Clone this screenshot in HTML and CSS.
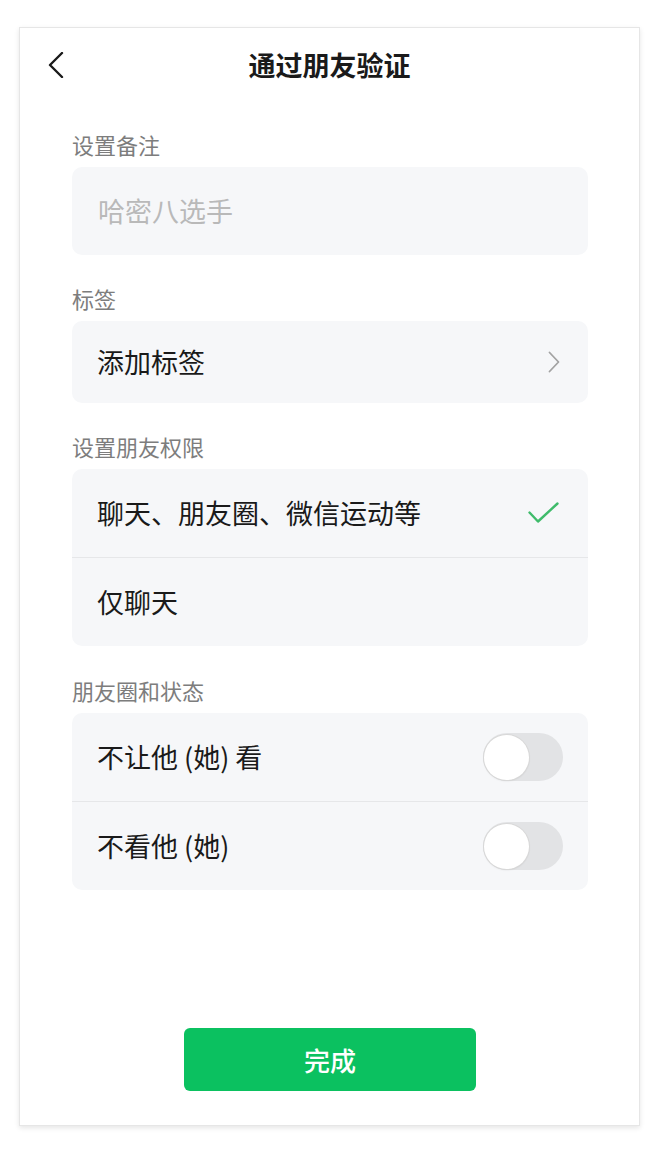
FILE: index.html
```html
<!DOCTYPE html>
<html lang="zh-CN">
<head>
<meta charset="utf-8">
<title>通过朋友验证</title>
<link rel="stylesheet" href="styles.css">
</head>
<body>
<div class="phone">
  <header class="topbar">
    <span class="back">
      <svg width="16" height="26" viewBox="0 0 16 26"><polyline points="14,1 2,13 14,25" fill="none" stroke="#1a1a1a" stroke-width="2.4" stroke-linecap="round" stroke-linejoin="round"/></svg>
    </span>
    <h1 class="title">通过朋友验证</h1>
    <span></span>
  </header>

  <main class="content">
    <section class="section first">
      <div class="label">设置备注</div>
      <div class="card">
        <div class="row input-row"><span class="placeholder">哈密八选手</span></div>
      </div>
    </section>

    <section class="section">
      <div class="label">标签</div>
      <div class="card">
        <div class="row tag-row">
          <span class="text">添加标签</span>
          <svg class="chev" width="12" height="22" viewBox="0 0 12 22"><polyline points="1.5,1.5 10.5,11 1.5,20.5" fill="none" stroke="#a3a3a3" stroke-width="1.8" stroke-linecap="round" stroke-linejoin="round"/></svg>
        </div>
      </div>
    </section>

    <section class="section">
      <div class="label">设置朋友权限</div>
      <div class="card">
        <div class="row">
          <span class="text">聊天、朋友圈、微信运动等</span>
          <svg class="check" width="31" height="22" viewBox="0 0 31 22"><polyline points="1.5,10.5 10,19.5 29.5,1.5" fill="none" stroke="#3fbb6b" stroke-width="2.4" stroke-linecap="round" stroke-linejoin="round"/></svg>
        </div>
        <div class="divider"></div>
        <div class="row">
          <span class="text">仅聊天</span>
        </div>
      </div>
    </section>

    <section class="section last">
      <div class="label">朋友圈和状态</div>
      <div class="card">
        <div class="row switch-row">
          <span class="text">不让他 (她) 看</span>
          <span class="switch"><span class="knob"></span></span>
        </div>
        <div class="divider"></div>
        <div class="row switch-row">
          <span class="text">不看他 (她)</span>
          <span class="switch"><span class="knob"></span></span>
        </div>
      </div>
    </section>
  </main>

  <div class="actions">
    <button class="done">完成</button>
  </div>
</div>
</body>
</html>
```

FILE: styles.css
```css
* {
  box-sizing: border-box;
}

html, body {
  margin: 0;
  padding: 0;
  background: #ffffff;
}

body {
  font-family: "Noto Sans CJK SC", "Noto Sans", sans-serif;
  color: #1a1a1a;
  padding-bottom: 20px;
}

.phone {
  width: 621px;
  height: 1099px;
  margin: 27px 0 0 19px;
  background: #ffffff;
  border: 1px solid #e6e6e6;
  box-shadow: 0 2px 5px rgba(0, 0, 0, 0.1);
  display: flex;
  flex-direction: column;
}

.topbar {
  height: 74px;
  display: grid;
  grid-template-columns: 1fr auto 1fr;
  align-items: center;
  padding: 0 28px;
}

.back {
  display: flex;
  align-items: center;
}

.back svg {
  display: block;
}

.title {
  margin: 0;
  font-size: 27px;
  font-weight: 600;
  line-height: 34px;
  color: #1a1a1a;
  letter-spacing: 0;
}

.content {
  padding: 0 51px 0 52px;
}

.section {
  margin-top: 31px;
}

.section.first {
  margin-top: 30px;
}

.section.last {
  margin-top: 32px;
}

.label {
  font-size: 22px;
  line-height: 24px;
  color: #7d7d7d;
  margin-bottom: 11px;
}

.card {
  background: #f6f7f9;
  border-radius: 10px;
  overflow: hidden;
}

.row {
  height: 88px;
  display: flex;
  align-items: center;
  justify-content: space-between;
  padding: 0 29px 0 25px;
}

.input-row {
  padding-left: 26px;
}

.tag-row {
  height: 82px;
  padding-right: 28px;
}

.switch-row {
  padding-right: 25px;
}

.text {
  font-size: 27px;
  line-height: 36px;
  color: #1a1a1a;
}

.placeholder {
  font-size: 27px;
  line-height: 36px;
  color: #b9b9b9;
}

.chev,
.check {
  display: block;
}

.divider {
  height: 1px;
  background: #e6e7e9;
}

.switch {
  width: 80px;
  height: 48px;
  border-radius: 24px;
  background: #e2e3e5;
  display: flex;
  align-items: center;
  padding-left: 1px;
}

.knob {
  width: 45px;
  height: 45px;
  border-radius: 50%;
  background: #ffffff;
  box-shadow: 0 0 0 1px #d8d8d8, 0 1px 2px rgba(0, 0, 0, 0.12);
}

.actions {
  margin-top: auto;
  padding-bottom: 34px;
  display: flex;
  justify-content: center;
}

.done {
  width: 292px;
  height: 63px;
  border: none;
  border-radius: 6px;
  background: #0bc160;
  color: #ffffff;
  font-family: "Noto Sans CJK SC", "Noto Sans", sans-serif;
  font-size: 26px;
  font-weight: 500;
  margin-left: 1px;
}
```
